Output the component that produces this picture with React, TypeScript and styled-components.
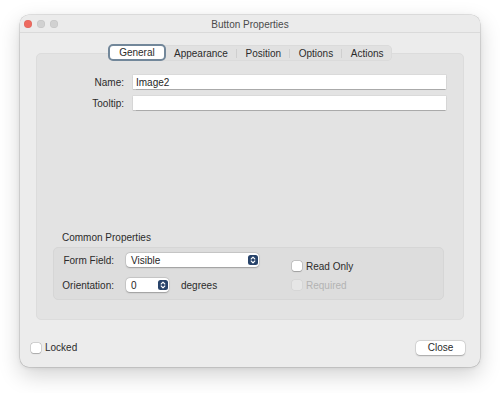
import React from 'react'
import styled, { createGlobalStyle } from 'styled-components'

const GlobalStyle = createGlobalStyle`
  html, body {
    margin: 0;
    padding: 0;
    background: #ffffff;
  }
  body {
    font-family: 'Liberation Sans', Arial, sans-serif;
    font-size: 10px;
    color: #2b2b2b;
    -webkit-font-smoothing: antialiased;
  }
`

const Page = styled.div`
  width: 500px;
  height: 393px;
  padding: 15px 20px 0;
  box-sizing: border-box;
`

const Window = styled.div`
  width: 460px;
  height: 352px;
  border-radius: 9px;
  background: #ececec;
  box-shadow: 0 0 0 0.5px rgba(0, 0, 0, 0.18), 0 8px 22px rgba(0, 0, 0, 0.18), 0 1px 4px rgba(0, 0, 0, 0.08);
  display: flex;
  flex-direction: column;
  overflow: hidden;
`

const TitleBar = styled.div`
  height: 17px;
  flex: none;
  display: flex;
  align-items: center;
  position: relative;
  border-bottom: 1px solid #dadada;
  background: #ebebeb;
`

const Lights = styled.div`
  display: flex;
  gap: 5px;
  padding-left: 4px;
  position: absolute;
  left: 0;
  top: 5px;
`

const Light = styled.span<{ $color: string }>`
  width: 8px;
  height: 8px;
  border-radius: 50%;
  background: ${p => p.$color};
  box-shadow: inset 0 0 0 0.5px rgba(0, 0, 0, 0.08);
`

const Title = styled.div`
  flex: 1;
  text-align: center;
  font-size: 10px;
  color: #4a4a4a;
  padding-top: 2px;
`

const Body = styled.div`
  flex: 1;
  display: flex;
  flex-direction: column;
  padding: 12px 16px 0;
`

const TabStrip = styled.div`
  align-self: center;
  height: 16px;
  display: flex;
  align-items: center;
  background: #e1e1e1;
  border-radius: 5px;
  box-shadow: inset 0 0 0 0.5px rgba(0, 0, 0, 0.05);
  position: relative;
  z-index: 1;
`

const Tab = styled.div<{ $active?: boolean }>`
  height: ${p => (p.$active ? '17px' : '16px')};
  box-sizing: border-box;
  display: flex;
  align-items: center;
  padding: 0 ${p => (p.$active ? '9px' : '8.3px')};
  color: #2b2b2b;
  border-radius: 5px;
  ${p =>
    p.$active &&
    `
    background: #ffffff;
    border: 2px solid #72879a;
    margin-top: -1px;
  `}
`

const TabSep = styled.span`
  width: 1px;
  height: 9px;
  background: #cfcfcf;
`

const Panel = styled.div`
  flex: 1;
  margin-top: -8px;
  background: #e3e3e3;
  border: 1px solid #dcdcdc;
  border-radius: 5px;
  display: flex;
  flex-direction: column;
  padding: 21px 17px 19px 16px;
`

const FieldRow = styled.div`
  display: flex;
  align-items: center;
  height: 14px;
  & + & {
    margin-top: 7px;
  }
`

const FieldLabel = styled.label<{ $width: number }>`
  width: ${p => p.$width}px;
  flex: none;
  text-align: right;
  color: #2b2b2b;
`

const TextField = styled.div`
  flex: 1;
  margin-left: 9px;
  height: 14px;
  box-sizing: border-box;
  background: #ffffff;
  padding-left: 3px;
  display: flex;
  align-items: center;
  color: #1e1e1e;
  box-shadow: 0 0 0 0.5px rgba(0, 0, 0, 0.08), 0 0.5px 1px rgba(0, 0, 0, 0.22);
`

const Spacer = styled.div`
  flex: 1;
`

const GroupTitle = styled.div`
  padding-left: 9px;
  height: 12px;
  line-height: 12px;
  margin-bottom: 3px;
`

const GroupBox = styled.div`
  height: 53px;
  box-sizing: border-box;
  margin-right: 2px;
  background: #dddddd;
  border: 1px solid #d6d6d6;
  border-radius: 5px;
  display: flex;
  padding: 5px 0 0 8px;
`

const GroupColumn = styled.div`
  display: flex;
  flex-direction: column;
  gap: 11px;
`

const GroupRow = styled.div`
  display: flex;
  align-items: center;
  height: 14px;
`

const Popup = styled.div<{ $width: number }>`
  width: ${p => p.$width}px;
  height: 14px;
  margin-left: 12px;
  box-sizing: border-box;
  background: #ffffff;
  border-radius: 4px;
  display: flex;
  align-items: center;
  justify-content: space-between;
  padding: 0 1.5px 0 5px;
  color: #1e1e1e;
  box-shadow: 0 0 0 0.5px rgba(0, 0, 0, 0.12), 0 0.5px 1.5px rgba(0, 0, 0, 0.25);
`

const Stepper = styled.span`
  width: 10px;
  height: 10px;
  border-radius: 2.5px;
  background: #27436a;
  display: flex;
  align-items: center;
  justify-content: center;
`

const Unit = styled.span`
  margin-left: 12px;
`

const CheckColumn = styled.div`
  display: flex;
  flex-direction: column;
  gap: 7px;
  margin-left: 33px;
  padding-top: 7px;
`

const CheckRow = styled.div<{ $disabled?: boolean }>`
  display: flex;
  align-items: center;
  height: 12px;
  color: ${p => (p.$disabled ? '#b3b3b3' : '#2b2b2b')};
`

const Box = styled.span<{ $disabled?: boolean }>`
  width: 10px;
  height: 10px;
  border-radius: 2.5px;
  margin-right: 4px;
  background: ${p => (p.$disabled ? '#e6e6e6' : '#ffffff')};
  box-shadow: ${p =>
    p.$disabled
      ? '0 0 0 0.5px rgba(0, 0, 0, 0.06)'
      : '0 0 0 0.5px rgba(0, 0, 0, 0.2), 0 0.5px 1px rgba(0, 0, 0, 0.2)'};
`

const Footer = styled.div`
  height: 47px;
  flex: none;
  box-sizing: border-box;
  display: flex;
  align-items: center;
  justify-content: space-between;
  padding: 8px 15px 0 11px;
`

const Button = styled.div`
  width: 49px;
  height: 14px;
  background: #ffffff;
  border-radius: 4px;
  display: flex;
  align-items: center;
  justify-content: center;
  color: #2b2b2b;
  box-shadow: 0 0 0 0.5px rgba(0, 0, 0, 0.12), 0 0.5px 1.5px rgba(0, 0, 0, 0.25);
`

function StepperIcon() {
  return (
    <Stepper>
      <svg width="6" height="8" viewBox="0 0 6 8">
        <path d="M1.2 3 L3 1.2 L4.8 3 M1.2 5 L3 6.8 L4.8 5" fill="none" stroke="#fff" strokeWidth="1.1" strokeLinecap="round" strokeLinejoin="round" />
      </svg>
    </Stepper>
  )
}

const tabs = ['General', 'Appearance', 'Position', 'Options', 'Actions']

export default function App() {
  const active = 0
  return (
    <>
      <GlobalStyle />
      <Page>
        <Window>
          <TitleBar>
            <Lights>
              <Light $color="#ee6a5f" />
              <Light $color="#d1d1d1" />
              <Light $color="#d1d1d1" />
            </Lights>
            <Title>Button Properties</Title>
          </TitleBar>
          <Body>
            <TabStrip>
              {tabs.map((t, i) => (
                <React.Fragment key={t}>
                  {i > 0 && i - 1 !== active && i !== active && <TabSep />}
                  <Tab $active={i === active}>{t}</Tab>
                </React.Fragment>
              ))}
            </TabStrip>
            <Panel>
              <FieldRow>
                <FieldLabel $width={71}>Name:</FieldLabel>
                <TextField>Image2</TextField>
              </FieldRow>
              <FieldRow>
                <FieldLabel $width={71}>Tooltip:</FieldLabel>
                <TextField />
              </FieldRow>
              <Spacer />
              <GroupTitle>Common Properties</GroupTitle>
              <GroupBox>
                <GroupColumn>
                  <GroupRow>
                    <FieldLabel $width={52}>Form Field:</FieldLabel>
                    <Popup $width={133}>
                      Visible
                      <StepperIcon />
                    </Popup>
                  </GroupRow>
                  <GroupRow>
                    <FieldLabel $width={52}>Orientation:</FieldLabel>
                    <Popup $width={43}>
                      0
                      <StepperIcon />
                    </Popup>
                    <Unit>degrees</Unit>
                  </GroupRow>
                </GroupColumn>
                <CheckColumn>
                  <CheckRow>
                    <Box />
                    Read Only
                  </CheckRow>
                  <CheckRow $disabled>
                    <Box $disabled />
                    Required
                  </CheckRow>
                </CheckColumn>
              </GroupBox>
            </Panel>
          </Body>
          <Footer>
            <CheckRow>
              <Box />
              Locked
            </CheckRow>
            <Button>Close</Button>
          </Footer>
        </Window>
      </Page>
    </>
  )
}
